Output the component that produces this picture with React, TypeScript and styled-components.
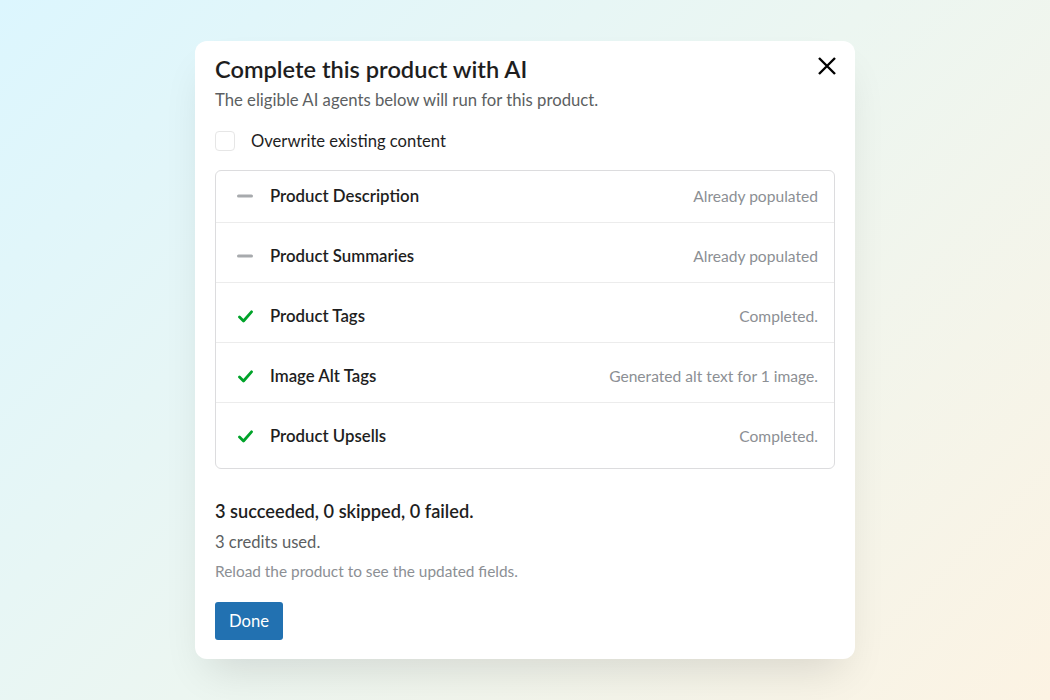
import styled, { createGlobalStyle } from 'styled-components';

const GlobalStyle = createGlobalStyle`
  html, body {
    margin: 0;
    padding: 0;
  }
  body {
    font-family: Lato, "Noto Sans", sans-serif;
    color: #1e1e1e;
  }
`;

const Backdrop = styled.div`
  width: 100vw;
  height: 100vh;
  display: flex;
  align-items: center;
  justify-content: center;
  background: linear-gradient(135deg, #dcf6fe 0%, #ecf6f1 50%, #fcf3e3 100%);
`;

const Modal = styled.div`
  position: relative;
  width: 660px;
  height: 618px;
  box-sizing: border-box;
  padding: 12px 20px 20px;
  background: #fff;
  border-radius: 12px;
  box-shadow: 0 22px 40px -12px rgba(0, 0, 0, 0.12);
  display: flex;
  flex-direction: column;
`;

const CloseButton = styled.button`
  position: absolute;
  right: 15px;
  top: 12px;
  width: 26px;
  height: 26px;
  padding: 0;
  border: 0;
  background: none;
  display: flex;
  align-items: center;
  justify-content: center;
  cursor: pointer;
`;

const Title = styled.h2`
  margin: 0;
  font-size: 23.6px;
  font-weight: 600;
  line-height: 32px;
  color: #1e1e1e;
`;

const Subtitle = styled.p`
  margin: 3px 0 0;
  font-size: 16.7px;
  line-height: 24px;
  color: #5c5f62;
`;

const CheckRow = styled.label`
  display: flex;
  align-items: center;
  gap: 16px;
  margin-top: 17px;
  font-size: 16.6px;
  line-height: 24px;
  color: #1e1e1e;
`;

const CheckBox = styled.span`
  width: 20px;
  height: 20px;
  box-sizing: border-box;
  border: 1px solid #e6e6e6;
  border-radius: 4px;
`;

const AgentList = styled.div`
  margin-top: 17px;
  border: 1px solid #dcdcde;
  border-radius: 6px;
`;

const AgentRow = styled.div`
  display: flex;
  align-items: center;
  padding: 21px 16px 14px 20px;
  border-top: 1px solid #ececec;

  &:first-child {
    border-top: 0;
    padding-top: 13px;
  }
  &:last-child {
    padding-bottom: 20px;
  }
`;

const StatusIcon = styled.span`
  width: 18px;
  display: flex;
  align-items: center;
  justify-content: center;
  margin-right: 16px;
`;

const AgentName = styled.span`
  flex: 1;
  font-size: 16.8px;
  font-weight: 600;
  line-height: 24px;
  color: #1e1e1e;
`;

const AgentNote = styled.span`
  font-size: 15.6px;
  line-height: 24px;
  color: #8c8f94;
`;

const Summary = styled.div`
  margin-top: 29px;
  font-size: 18.2px;
  font-weight: 600;
  line-height: 26px;
  color: #1e1e1e;
`;

const Credits = styled.div`
  margin-top: 6px;
  font-size: 16.6px;
  line-height: 24px;
  color: #5c5f62;
`;

const Hint = styled.div`
  margin-top: 6px;
  font-size: 15.4px;
  line-height: 22px;
  color: #8c8f94;
`;

const DoneButton = styled.button`
  align-self: flex-start;
  margin-top: 20px;
  height: 38px;
  flex-shrink: 0;
  padding: 0 14px;
  border: 0;
  border-radius: 3px;
  background: #2271b1;
  color: #fff;
  font-family: inherit;
  font-size: 16.6px;
  cursor: pointer;
`;

const Dash = () => (
  <svg width="18" height="4" viewBox="0 0 18 4">
    <rect x="1" y="0.5" width="16" height="3" rx="1.5" fill="#a7aaad" />
  </svg>
);

const Check = () => (
  <svg width="15" height="13" viewBox="0 0 15 13">
    <path d="M1.5 7 L5.5 11 L13.5 1.8" fill="none" stroke="#00a32a" strokeWidth="2.8" strokeLinecap="round" strokeLinejoin="round" />
  </svg>
);

type Agent = { name: string; note: string; done: boolean };

const agents: Agent[] = [
  { name: 'Product Description', note: 'Already populated', done: false },
  { name: 'Product Summaries', note: 'Already populated', done: false },
  { name: 'Product Tags', note: 'Completed.', done: true },
  { name: 'Image Alt Tags', note: 'Generated alt text for 1 image.', done: true },
  { name: 'Product Upsells', note: 'Completed.', done: true },
];

const App = () => {
  return (
    <Backdrop>
      <GlobalStyle />
      <Modal>
        <CloseButton aria-label="Close">
          <svg width="22" height="22" viewBox="0 0 22 22">
            <path d="M3 3 L19 19 M19 3 L3 19" stroke="#000" strokeWidth="2.4" strokeLinecap="butt" />
          </svg>
        </CloseButton>
        <Title>Complete this product with AI</Title>
        <Subtitle>The eligible AI agents below will run for this product.</Subtitle>
        <CheckRow>
          <CheckBox />
          Overwrite existing content
        </CheckRow>
        <AgentList>
          {agents.map((a) => (
            <AgentRow key={a.name}>
              <StatusIcon>{a.done ? <Check /> : <Dash />}</StatusIcon>
              <AgentName>{a.name}</AgentName>
              <AgentNote>{a.note}</AgentNote>
            </AgentRow>
          ))}
        </AgentList>
        <Summary>3 succeeded, 0 skipped, 0 failed.</Summary>
        <Credits>3 credits used.</Credits>
        <Hint>Reload the product to see the updated fields.</Hint>
        <DoneButton>Done</DoneButton>
      </Modal>
    </Backdrop>
  );
};

export default App;
